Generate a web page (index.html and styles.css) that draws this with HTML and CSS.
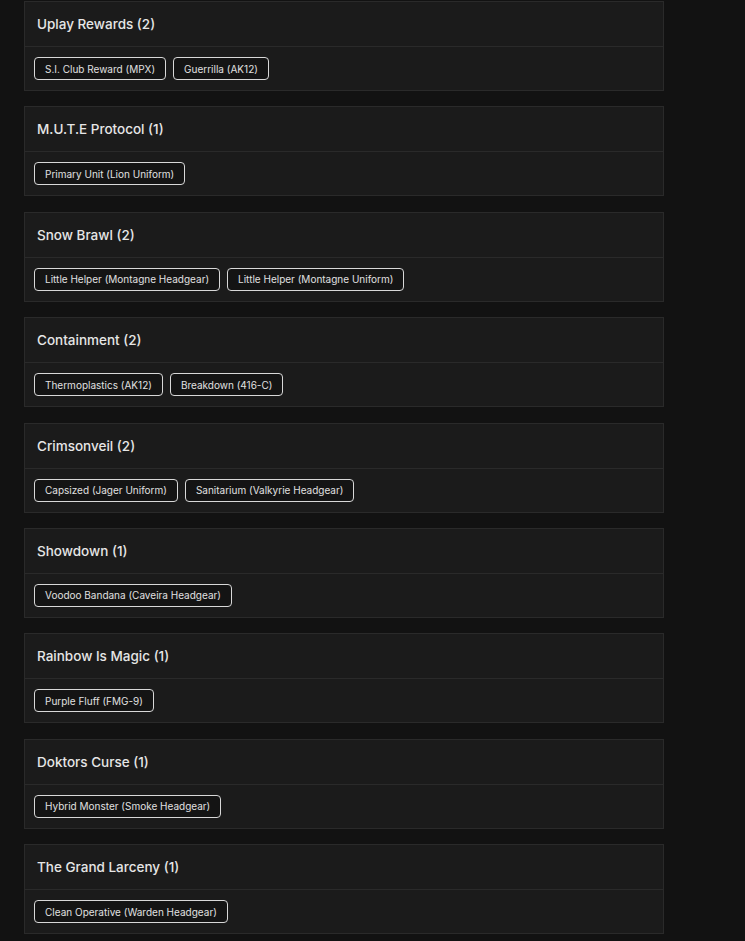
FILE: index.html
```html
<!DOCTYPE html>
<html>
<head lang="en">
    <meta charset="UTF-8">
    <title>Event Rewards</title>
    <link rel="stylesheet" href="styles.css">
</head>
<body>
    <div class="list">
        <div class="event">
            <div class="event-head">Uplay Rewards (2)</div>
            <div class="event-body">
                <span class="tag">S.I. Club Reward (MPX)</span>
                <span class="tag">Guerrilla (AK12)</span>
            </div>
        </div>
        <div class="event">
            <div class="event-head">M.U.T.E Protocol (1)</div>
            <div class="event-body">
                <span class="tag">Primary Unit (Lion Uniform)</span>
            </div>
        </div>
        <div class="event">
            <div class="event-head">Snow Brawl (2)</div>
            <div class="event-body">
                <span class="tag">Little Helper (Montagne Headgear)</span>
                <span class="tag">Little Helper (Montagne Uniform)</span>
            </div>
        </div>
        <div class="event">
            <div class="event-head">Containment (2)</div>
            <div class="event-body">
                <span class="tag">Thermoplastics (AK12)</span>
                <span class="tag">Breakdown (416-C)</span>
            </div>
        </div>
        <div class="event">
            <div class="event-head">Crimsonveil (2)</div>
            <div class="event-body">
                <span class="tag">Capsized (Jager Uniform)</span>
                <span class="tag">Sanitarium (Valkyrie Headgear)</span>
            </div>
        </div>
        <div class="event">
            <div class="event-head">Showdown (1)</div>
            <div class="event-body">
                <span class="tag">Voodoo Bandana (Caveira Headgear)</span>
            </div>
        </div>
        <div class="event">
            <div class="event-head">Rainbow Is Magic (1)</div>
            <div class="event-body">
                <span class="tag">Purple Fluff (FMG-9)</span>
            </div>
        </div>
        <div class="event">
            <div class="event-head">Doktors Curse (1)</div>
            <div class="event-body">
                <span class="tag">Hybrid Monster (Smoke Headgear)</span>
            </div>
        </div>
        <div class="event">
            <div class="event-head">The Grand Larceny (1)</div>
            <div class="event-body">
                <span class="tag">Clean Operative (Warden Headgear)</span>
            </div>
        </div>
    </div>
</body>
</html>
```

FILE: styles.css
```css
*{
    margin:0;  padding:0;
    box-sizing: border-box;
}
body{
    background-color: #121212;
    font-family: "Inter", "Noto Sans", sans-serif;
    color:#e6e6e6;
}
.list{
    width:640px;
    margin-left:24px;
    padding-top:1px;
}
.event{
    border:1px solid #2a2a2a;
    background-color: #1b1b1b;
    margin-bottom:15.4px;
}
.event-head{
    height:45px;
    padding:0 12px;
    display:flex;
    align-items:center;
    font-size:13.5px;
    font-weight:500;
    border-bottom:1px solid #2a2a2a;
}
.event-body{
    height:43px;
    padding:0 9px;
    display:flex;
    align-items:center;
    gap:7px;
}
.tag{
    height:23px;
    padding:0 10px;
    display:flex;
    align-items:center;
    font-size:10px;
    color:#e0e0e0;
    background-color: #141414;
    border:1px solid #d8d8d8;
    border-radius:4px;
}
```
